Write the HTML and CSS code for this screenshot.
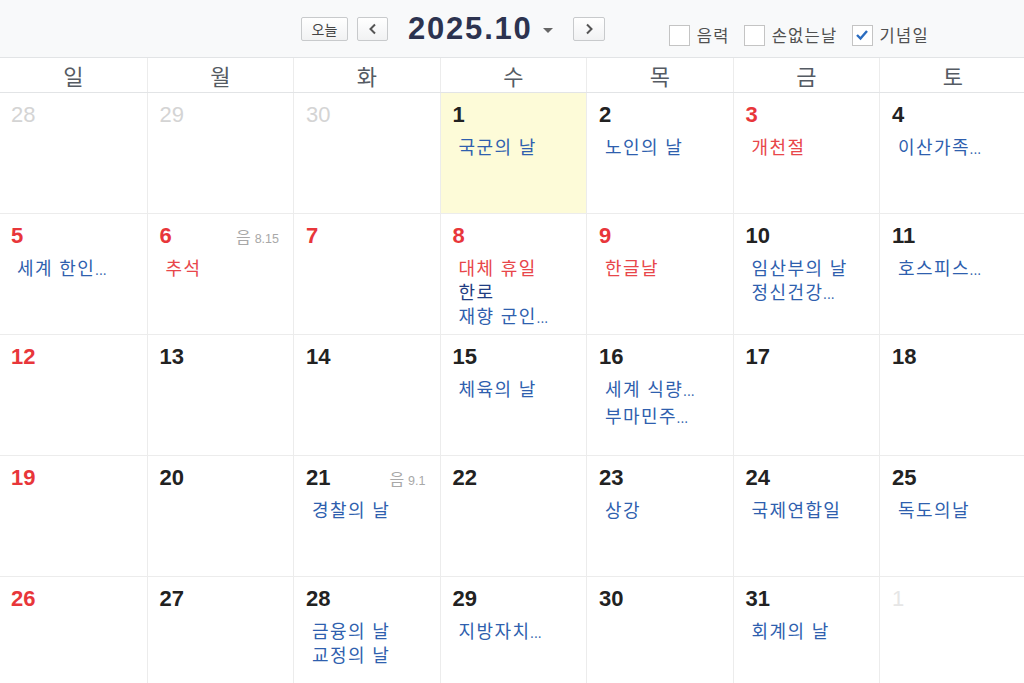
FILE: index.html
```html
<!DOCTYPE html>
<html lang="ko">
<head>
<meta charset="utf-8">
<title>2025.10</title>
<link rel="stylesheet" href="styles.css">
</head>
<body>
<div class="page">
  <div class="toolbar">
    <button class="btn today-btn">오늘</button>
    <button class="btn arrow-btn prev"><svg width="10" height="12" viewBox="0 0 10 12"><path d="M7 1.5 L2.5 6 L7 10.5" fill="none" stroke="#555" stroke-width="2"/></svg></button>
    <div class="title">2025.10</div>
    <span class="caret"></span>
    <button class="btn arrow-btn next"><svg width="10" height="12" viewBox="0 0 10 12"><path d="M3 1.5 L7.5 6 L3 10.5" fill="none" stroke="#555" stroke-width="2"/></svg></button>
    <div class="options">
      <label class="opt"><span class="box"></span>음력</label>
      <label class="opt"><span class="box"></span>손없는날</label>
      <label class="opt"><span class="box checked"><svg width="14" height="12" viewBox="0 0 14 12"><path d="M2 6 L5.5 9.5 L12 2" fill="none" stroke="#2a6cc0" stroke-width="2.4"/></svg></span>기념일</label>
    </div>
  </div>

  <div class="weekdays">
    <div class="wd">일</div><div class="wd">월</div><div class="wd">화</div><div class="wd">수</div><div class="wd">목</div><div class="wd">금</div><div class="wd">토</div>
  </div>

  <div class="grid">
    <div class="cell"><div class="head"><span class="num other">28</span></div></div>
    <div class="cell"><div class="head"><span class="num other">29</span></div></div>
    <div class="cell"><div class="head"><span class="num other">30</span></div></div>
    <div class="cell today"><div class="head"><span class="num">1</span></div><div class="events"><div class="ev">국군의 날</div></div></div>
    <div class="cell"><div class="head"><span class="num">2</span></div><div class="events"><div class="ev">노인의 날</div></div></div>
    <div class="cell"><div class="head"><span class="num red">3</span></div><div class="events"><div class="ev hol">개천절</div></div></div>
    <div class="cell"><div class="head"><span class="num">4</span></div><div class="events"><div class="ev">이산가족<span class="dots">...</span></div></div></div>

    <div class="cell"><div class="head"><span class="num red">5</span></div><div class="events"><div class="ev">세계 한인<span class="dots">...</span></div></div></div>
    <div class="cell"><div class="head"><span class="num red">6</span><span class="lunar"><span class="lu">음</span>8.15</span></div><div class="events"><div class="ev hol">추석</div></div></div>
    <div class="cell"><div class="head"><span class="num red">7</span></div></div>
    <div class="cell"><div class="head"><span class="num red">8</span></div><div class="events"><div class="ev hol">대체 휴일</div><div class="ev dark">한로</div><div class="ev">재향 군인<span class="dots">...</span></div></div></div>
    <div class="cell"><div class="head"><span class="num red">9</span></div><div class="events"><div class="ev hol">한글날</div></div></div>
    <div class="cell"><div class="head"><span class="num">10</span></div><div class="events"><div class="ev">임산부의 날</div><div class="ev">정신건강<span class="dots">...</span></div></div></div>
    <div class="cell"><div class="head"><span class="num">11</span></div><div class="events"><div class="ev">호스피스<span class="dots">...</span></div></div></div>

    <div class="cell"><div class="head"><span class="num red">12</span></div></div>
    <div class="cell"><div class="head"><span class="num">13</span></div></div>
    <div class="cell"><div class="head"><span class="num">14</span></div></div>
    <div class="cell"><div class="head"><span class="num">15</span></div><div class="events"><div class="ev">체육의 날</div></div></div>
    <div class="cell"><div class="head"><span class="num">16</span></div><div class="events"><div class="ev">세계 식량<span class="dots">...</span></div><div class="ev">부마민주<span class="dots">...</span></div></div></div>
    <div class="cell"><div class="head"><span class="num">17</span></div></div>
    <div class="cell"><div class="head"><span class="num">18</span></div></div>

    <div class="cell"><div class="head"><span class="num red">19</span></div></div>
    <div class="cell"><div class="head"><span class="num">20</span></div></div>
    <div class="cell"><div class="head"><span class="num">21</span><span class="lunar"><span class="lu">음</span>9.1</span></div><div class="events"><div class="ev">경찰의 날</div></div></div>
    <div class="cell"><div class="head"><span class="num">22</span></div></div>
    <div class="cell"><div class="head"><span class="num">23</span></div><div class="events"><div class="ev">상강</div></div></div>
    <div class="cell"><div class="head"><span class="num">24</span></div><div class="events"><div class="ev">국제연합일</div></div></div>
    <div class="cell"><div class="head"><span class="num">25</span></div><div class="events"><div class="ev">독도의날</div></div></div>

    <div class="cell"><div class="head"><span class="num red">26</span></div></div>
    <div class="cell"><div class="head"><span class="num">27</span></div></div>
    <div class="cell"><div class="head"><span class="num">28</span></div><div class="events"><div class="ev">금융의 날</div><div class="ev">교정의 날</div></div></div>
    <div class="cell"><div class="head"><span class="num">29</span></div><div class="events"><div class="ev">지방자치<span class="dots">...</span></div></div></div>
    <div class="cell"><div class="head"><span class="num">30</span></div></div>
    <div class="cell"><div class="head"><span class="num">31</span></div><div class="events"><div class="ev">회계의 날</div></div></div>
    <div class="cell"><div class="head"><span class="num faint">1</span></div></div>
  </div>
</div>
</body>
</html>
```

FILE: styles.css
```css
* { box-sizing: border-box; }
html, body { margin: 0; padding: 0; }
body {
  width: 1024px;
  height: 683px;
  overflow: hidden;
  background: #ffffff;
  font-family: "Noto Sans CJK KR", "Noto Sans", sans-serif;
}
.page { width: 1024px; overflow: hidden; }

.toolbar {
  height: 58px;
  background: #f8f9fa;
  border-bottom: 1px solid #e2e4e6;
  display: flex;
  align-items: center;
  padding: 1px 0 0 301px;
}
.btn {
  height: 24px;
  border: 1px solid #c8cacc;
  border-radius: 2px;
  background: linear-gradient(#ffffff, #f1f2f3);
  font-family: "Noto Sans CJK KR", sans-serif;
  color: #444;
  padding: 0;
  display: flex;
  align-items: center;
  justify-content: center;
}
.today-btn { width: 47px; font-size: 14px; }
.arrow-btn { width: 31px; }
.prev { margin-left: 9px; }
.title {
  margin-left: 20px;
  font-family: "Liberation Sans", Arial, sans-serif;
  font-weight: bold;
  font-size: 31px;
  letter-spacing: 1.8px;
  color: #2c3350;
  line-height: 34px;
}
.caret {
  margin-left: 10px;
  width: 0; height: 0;
  border-left: 5px solid transparent;
  border-right: 5px solid transparent;
  border-top: 5px solid #666;
  margin-top: 2px;
}
.next { margin-left: 20px; width: 32px; }

.options {
  display: flex;
  align-items: center;
  margin-left: 64px;
  margin-top: 12px;
}
.opt {
  display: flex;
  align-items: center;
  font-size: 16.5px;
  color: #505050;
  margin-right: 14px;
  letter-spacing: 1.3px;
}
.box {
  width: 21px; height: 21px;
  border: 1px solid #c4c4c4;
  background: #fff;
  margin-right: 7px;
  display: flex;
  align-items: center;
  justify-content: center;
}

.weekdays {
  display: grid;
  grid-template-columns: repeat(7, 146.5px);
  height: 35px;
  border-bottom: 1px solid #e2e4e6;
  background: #fff;
}
.wd {
  border-left: 1px solid #ececec;
  text-align: center;
  font-size: 22px;
  line-height: 34px;
  color: #555b63;
}
.wd:first-child { border-left: none; }

.grid {
  display: grid;
  grid-template-columns: repeat(7, 146.5px);
  grid-auto-rows: 121px;
}
.cell {
  border-left: 1px solid #ececec;
  border-bottom: 1px solid #ececec;
  padding: 9px 14px 0 12px;
  background: #fff;
}
.cell:nth-child(7n+1) { border-left: none; padding-left: 11px; }
.cell.today { background: #fdfbd8; }

.head {
  display: flex;
  justify-content: space-between;
  align-items: baseline;
  height: 26px;
}
.num {
  font-family: "Liberation Sans", Arial, sans-serif;
  font-weight: bold;
  font-size: 22px;
  line-height: 26px;
  color: #222222;
}
.num.red { color: #e8363a; }
.num.other { color: #d4d4d4; font-weight: normal; }
.num.faint { color: #e6e6e6; font-weight: normal; }
.lunar {
  font-family: "Liberation Sans", Arial, sans-serif;
  font-size: 12.5px;
  color: #a8a8a8;
}
.lu {
  font-family: "Noto Sans CJK KR", sans-serif;
  font-size: 16px;
  margin-right: 4px;
}

.events { margin-top: 6px; padding-left: 6px; }
.ev {
  font-size: 18px;
  line-height: 24px;
  letter-spacing: 1.4px;
  color: #2f5fae;
  white-space: nowrap;
}
.ev.hol { color: #e8464a; }
.ev.dark { color: #1f3d82; }
.dots { font-size: 12px; letter-spacing: 0.5px; }
```
